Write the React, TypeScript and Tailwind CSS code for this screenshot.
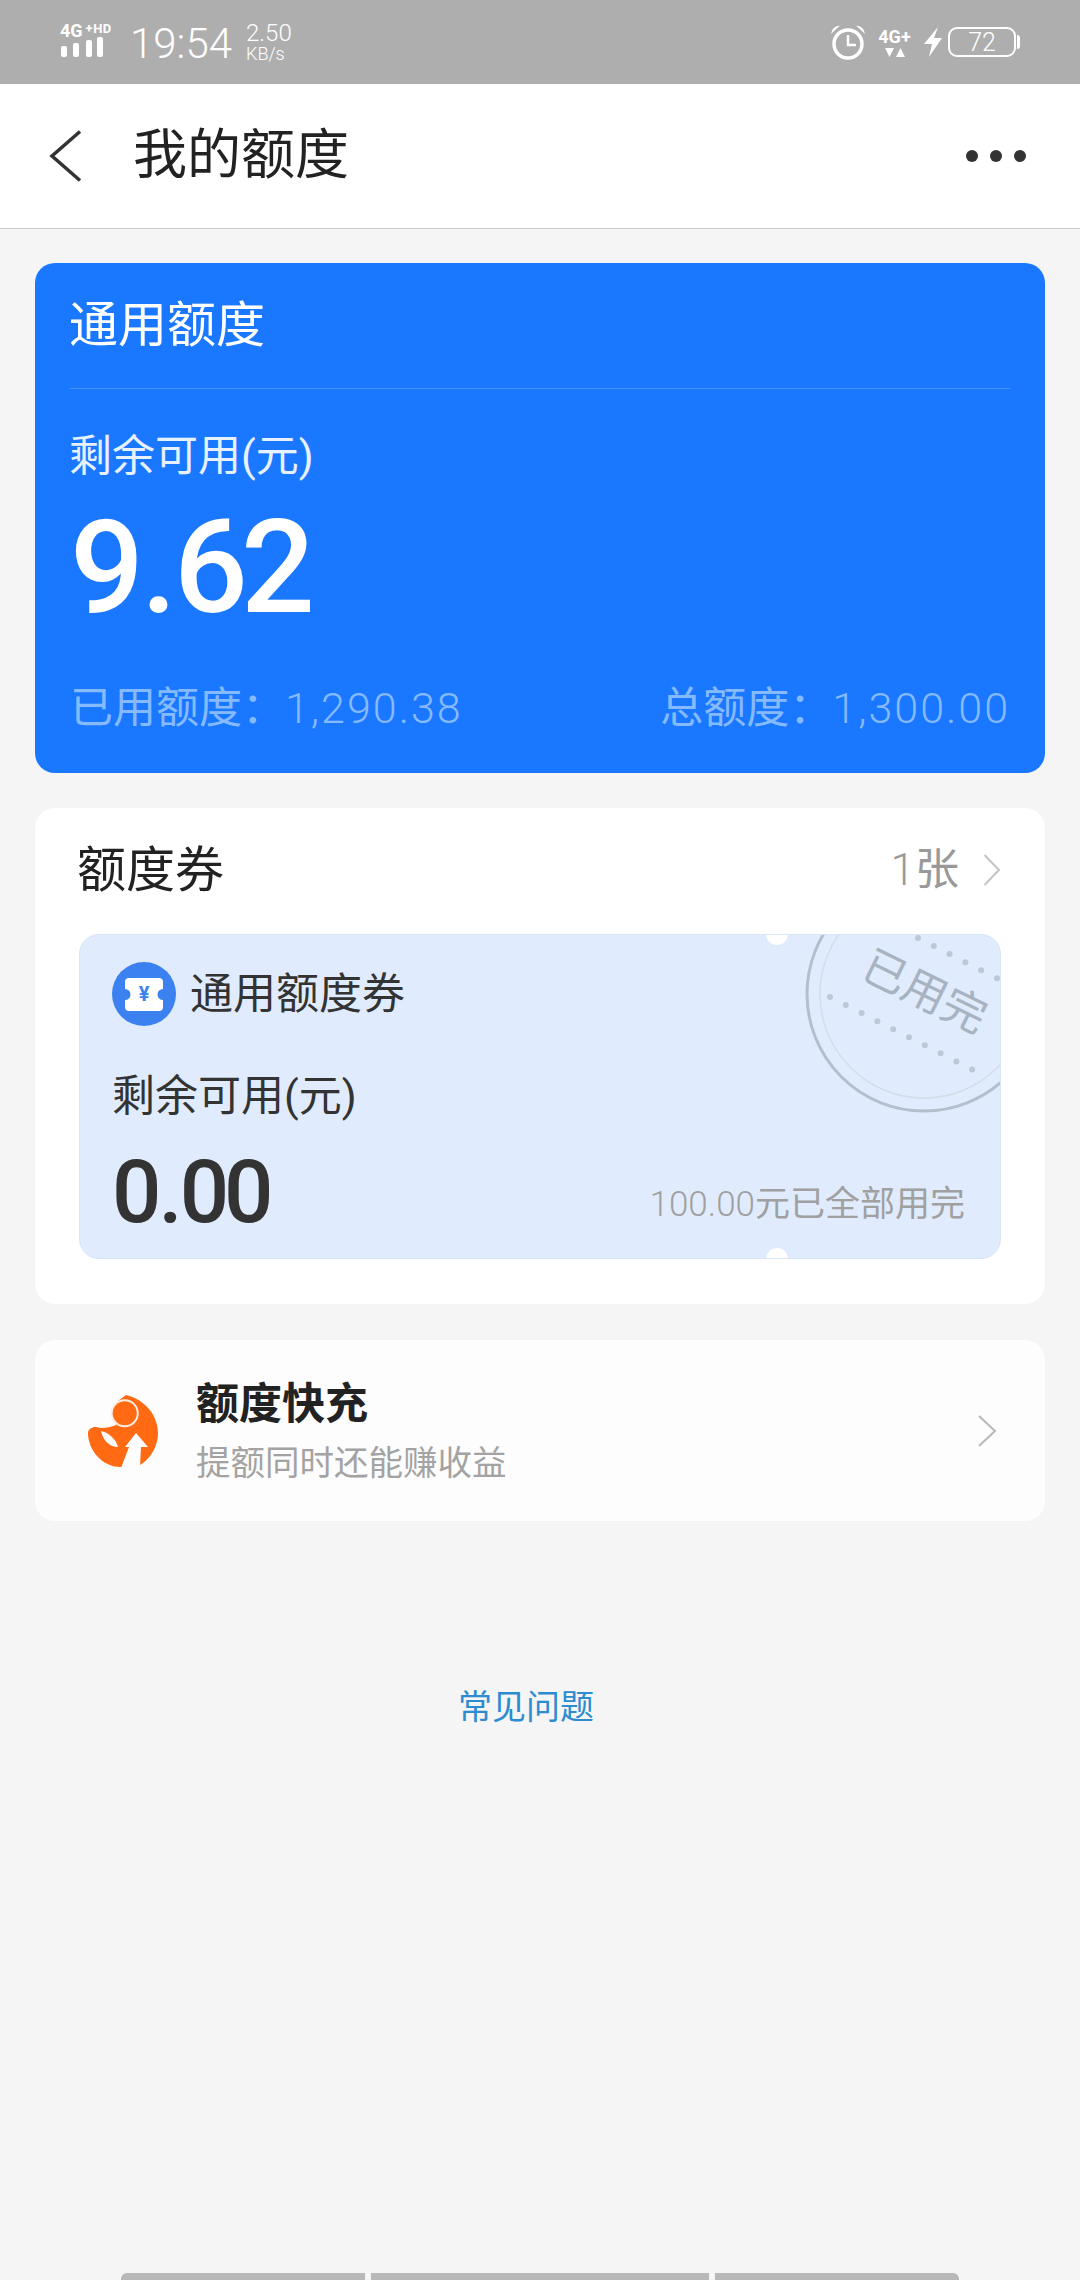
const font = "font-['Roboto','Noto_Sans_CJK_SC',sans-serif]";

function SignalIcon() {
  return (
    <div className="flex w-[58px] flex-col">
      <div className="flex h-[14px] items-start text-[18px] font-bold leading-[15px] text-white">
        4G<span className="ml-[3px] text-[13px] leading-[11px] tracking-[0.5px]">+HD</span>
      </div>
      <svg width="43" height="20" viewBox="0 0 43 20">
        <rect x="1" y="9" width="6" height="11" rx="2" fill="#fff" />
        <rect x="13" y="6" width="6" height="14" rx="2" fill="#fff" />
        <rect x="26" y="3" width="6" height="17" rx="2" fill="#fff" />
        <rect x="37" y="0" width="6" height="20" rx="2" fill="#fff" />
      </svg>
    </div>
  );
}

function StatusBar() {
  return (
    <div className={`flex h-[84px] shrink-0 items-center justify-between bg-[#aeaeae] pl-[60px] pr-[60px] text-white ${font}`}>
      <div className="flex items-center">
        <div className="mt-[-4px]">
          <SignalIcon />
        </div>
        <span className="ml-[12px] mt-[4px] text-[42px] font-light leading-none">19:54</span>
        <div className="ml-[14px] flex flex-col font-light">
          <span className="text-[24px] leading-[24px]">2.50</span>
          <span className="text-[18px] leading-[18px]">KB/s</span>
        </div>
      </div>
      <div className="flex items-center">
        <svg width="36" height="36" viewBox="0 0 36 36" fill="none">
          <circle cx="18" cy="20" r="14" stroke="#fff" strokeWidth="3.5" />
          <path d="M18 11v10h8" stroke="#fff" strokeWidth="2.500" />
          <path d="M1 10 Q2 2 10 1.500 Z M35 10 Q34 2 26 1.500 Z" fill="#fff" />
        </svg>
        <div className="ml-[10px] flex w-[37px] flex-col items-center">
          <div className="text-[18px] font-bold leading-[17px]">4G+</div>
          <svg width="20" height="9" viewBox="0 0 20 9" className="mt-[3px]">
            <path d="M0 0h9L4.500 9z M11 9h9L15.500 0z" fill="#fff" />
          </svg>
        </div>
        <svg width="20" height="30" viewBox="0 0 20 30" className="ml-[11px]">
          <path d="M14 0 L0 17 H8 L5 30 L18 11 H10 Z" fill="#fff" />
        </svg>
        <div className="ml-[4px] flex h-[30px] w-[68px] items-center justify-center rounded-[9px] border-2 border-white text-[25px] font-light leading-none">
          72
        </div>
        <div className="ml-[1px] h-[14px] w-[3px] rounded-r-[3px] bg-white" />
      </div>
    </div>
  );
}

function NavBar() {
  return (
    <div className="flex h-[145px] shrink-0 items-center border-b border-[#cccccc] bg-white">
      <svg width="34" height="52" viewBox="0 0 34 52" fill="none" className="ml-[49px]">
        <path d="M31 1.500 L3 26 L31 50.500" stroke="#333333" strokeWidth="3.500" />
      </svg>
      <h1 className={`ml-[50px] flex-1 text-[54px] font-normal leading-none text-[#222222] ${font}`}>我的额度</h1>
      <div className="mr-[54px] flex gap-[12px]">
        <span className="h-[12px] w-[12px] rounded-full bg-[#333333]" />
        <span className="h-[12px] w-[12px] rounded-full bg-[#333333]" />
        <span className="h-[12px] w-[12px] rounded-full bg-[#333333]" />
      </div>
    </div>
  );
}

function BalanceCard() {
  return (
    <section className={`mx-[35px] mt-[34px] h-[510px] rounded-[20px] bg-[#1a77ff] px-[35px] text-white ${font}`}>
      <div className="flex h-[126px] items-center border-b border-white/20 text-[49px] leading-none">
        <span className="ml-[-1px]">通用额度</span>
      </div>
      <div className="mt-[46px] ml-[-1px] text-[43px] leading-none text-white/90">剩余可用(元)</div>
      <div className="mt-[25px] text-[130px] font-medium leading-none tracking-[-7px]">
        9<span className="mx-[4px]">.</span>62
      </div>
      <div className="mt-[54px] flex justify-between text-[43px] leading-none text-[#86baff]">
        <span>
          已用额度：<span className="font-light tracking-[2px]">1,290.38</span>
        </span>
        <span>
          总额度：<span className="font-light tracking-[2px]">1,300.00</span>
        </span>
      </div>
    </section>
  );
}

function Stamp() {
  return (
    <svg width="210" height="200" viewBox="0 0 210 200" className="absolute right-0 top-0">
      <circle cx="134" cy="59" r="117" fill="none" stroke="#b3bfcc" strokeWidth="3" />
      <circle cx="134" cy="59" r="104" fill="none" stroke="#d3dde9" strokeWidth="1.500" />
      {[...Array(10)].map((_, i) => (
        <circle key={i} cx={40 + i * 15.800} cy={62 + i * 8.050} r="3" fill="#bcc8d6" />
      ))}
      {[...Array(6)].map((_, i) => (
        <circle key={i} cx={128 + i * 15.800} cy={3 + i * 8.050} r="3" fill="#bcc8d6" />
      ))}
      <text
        x="135"
        y="72"
        textAnchor="middle"
        transform="rotate(26 135 56)"
        fontSize="44"
        fontFamily="'Noto Sans CJK SC',sans-serif"
        fill="#a7b3c1"
      >
        已用完
      </text>
    </svg>
  );
}

function CouponCard() {
  return (
    <section className={`mx-[35px] mt-[35px] h-[496px] rounded-[20px] bg-white px-[44px] ${font}`}>
      <div className="flex h-[126px] items-center justify-between pb-[2px]">
        <span className="ml-[-2px] text-[49px] leading-none text-[#222222]">额度券</span>
        <div className="flex items-center text-[#999999]">
          <span className="text-[44px] leading-none">
            <span className="font-light">1</span>张
          </span>
          <svg width="18" height="32" viewBox="0 0 18 32" fill="none" className="ml-[24px]">
            <path d="M1.500 1 L16 16 L1.500 31" stroke="#c4c4c4" strokeWidth="2" />
          </svg>
        </div>
      </div>
      <div className="relative h-[325px] overflow-hidden rounded-[20px] border border-[#d8e6f9] bg-[#e0ecfd] pl-[32px] pr-[35px]">
        <span className="absolute left-[686px] top-[-12px] h-[22px] w-[22px] rounded-full bg-white" />
        <span className="absolute bottom-[-12px] left-[686px] h-[22px] w-[22px] rounded-full bg-white" />
        <Stamp />
        <div className="mt-[27px] flex items-center">
          <div className="relative flex h-[64px] w-[64px] items-center justify-center rounded-full bg-[#3b82f0]">
            <svg width="38" height="33" viewBox="0 0 38 33">
              <path
                d="M4 0 H34 Q38 0 38 4 V11 A5.500 5.500 0 0 0 38 22 V29 Q38 33 34 33 H4 Q0 33 0 29 V22 A5.500 5.500 0 0 0 0 11 V4 Q0 0 4 0 Z"
                fill="#fff"
              />
            </svg>
            <span className="absolute inset-0 flex items-center justify-center text-[20px] font-bold leading-none text-[#3b82f0]">¥</span>
          </div>
          <span className="ml-[14px] text-[43px] leading-none text-[#333333]">通用额度券</span>
        </div>
        <div className="mt-[49px] text-[43px] leading-none text-[#333333]">剩余可用(元)</div>
        <div className="mt-[31px] flex items-end justify-between">
          <span className="text-[87px] font-medium leading-none tracking-[-5px] text-[#333333]">
            0<span className="mx-[2px]">.</span>00
          </span>
          <span className="mb-[14px] text-[35px] leading-none text-[#a0a0a0]">
            <span className="font-light">100.00</span>元已全部用完
          </span>
        </div>
      </div>
    </section>
  );
}

function QuickFill() {
  return (
    <section className={`mx-[35px] mt-[36px] flex h-[181px] items-center rounded-[20px] bg-[#fdfdfd] pl-[53px] pr-[48px] ${font}`}>
      <svg width="70" height="72" viewBox="0 0 70 72" className="shrink-0">
        <path
          d="M38 0 C56 4 70 20 70 38 C70 52 62 64 52 70 L32 72 C18 72 2 60 0 40 C-1 34 5 30 12 33 C18 33 24 32 28 30 L30 6 Z"
          fill="#ff6a13"
        />
        <circle cx="36.700" cy="18.300" r="14" fill="#fdeee4" />
        <circle cx="36.700" cy="18.300" r="12" fill="#ff6a13" />
        <path d="M13 36 C20 37 28 44 30 52 C22 52 15 46 13 36 Z" fill="#fdfdfd" />
        <path d="M48 38 L60 52 L53 52 L52 71 L33 73 L41 52 L37 52 Z" fill="#fdfdfd" />
      </svg>
      <div className="ml-[38px] flex-1 pt-[3px]">
        <div className="text-[43px] font-bold leading-none text-[#222222]">额度快充</div>
        <div className="mt-[20px] text-[34.500px] leading-none text-[#a3a3a3]">提额同时还能赚收益</div>
      </div>
      <svg width="20" height="32" viewBox="0 0 20 32" fill="none" className="shrink-0">
        <path d="M2 1 L18 16 L2 31" stroke="#b8b8b8" strokeWidth="2" />
      </svg>
    </section>
  );
}

export default function App() {
  return (
    <main className={`flex h-[2280px] w-[1080px] flex-col overflow-hidden bg-[#f5f5f5] ${font}`}>
      <StatusBar />
      <NavBar />
      <BalanceCard />
      <CouponCard />
      <QuickFill />
      <div className="mt-[169px] pr-[28px] text-center text-[34px] leading-none text-[#2d8cd0]">常见问题</div>
      <div className="mt-auto flex justify-center gap-[6px]">
        <span className="h-[7px] w-[244px] rounded-tl-[6px] bg-[#b8b8b8]" />
        <span className="h-[7px] w-[338px] bg-[#b8b8b8]" />
        <span className="h-[7px] w-[244px] rounded-tr-[6px] bg-[#b8b8b8]" />
      </div>
    </main>
  );
}
